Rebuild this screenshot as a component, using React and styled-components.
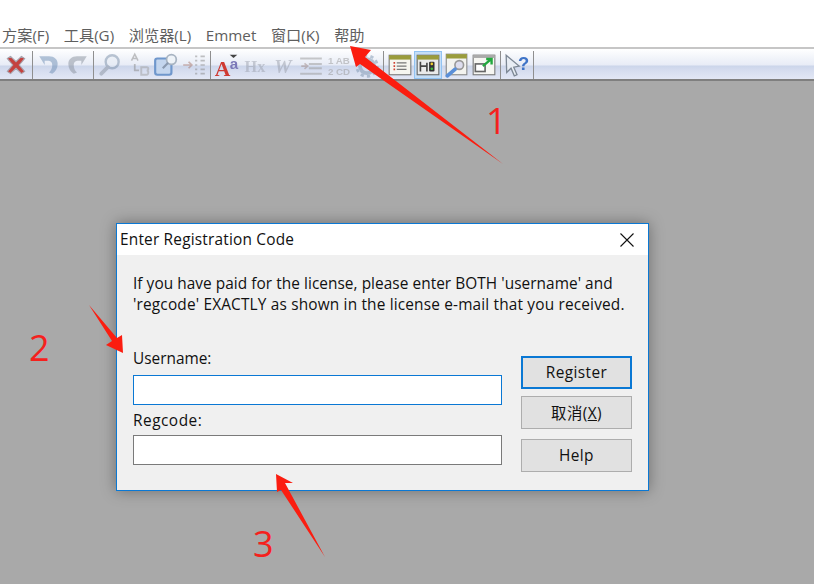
import React from 'react';
import styled, { createGlobalStyle } from 'styled-components';

const Global = createGlobalStyle`
  html, body { margin: 0; padding: 0; background: #fff; overflow: hidden; }
  #root { width: 814px; height: 584px; }
`;
const Page = styled.div`
  position: relative; width: 814px; height: 584px; overflow: hidden;
  display: flex; flex-direction: column;
  font-family: "Open Sans", "Noto Sans CJK SC", sans-serif;
`;
const MenuBar = styled.div`
  height: 47px; box-sizing: border-box; padding: 0 0 0 2px; background: #fff;
  display: flex; align-items: flex-end; gap: 14.6px;
  font-size: 15.2px; color: #5e5e5e;
`;
const MenuItem = styled.span` line-height: 24px; white-space: nowrap; `;
const Toolbar = styled.div`
  height: 34px; box-sizing: border-box; padding: 2px 0 0 2px;
  display: flex; align-items: flex-start;
  border-top: 2px solid #c6c6c6; border-bottom: 2px solid #7f7f7f;
  background: linear-gradient(#ffffff 0%, #f1f4fa 30%, #e8ecf6 54%, #cbd5ea 56%, #d6ddef 72%, #e2e7f5 100%);
`;
const ToolBtn = styled.div`
  width: 28px; height: 28px; box-sizing: border-box; flex: none;
  display: flex; align-items: center; justify-content: center;
  border: 1px solid ${p => (p.$active ? '#92c3f2' : 'transparent')};
  background: ${p => (p.$active ? '#c5def6' : 'transparent')};
  opacity: ${p => (p.$dim ? 0.5 : 1)};
  svg { filter: blur(0.6px); display: block; overflow: visible; }
`;
const ToolSep = styled.div`
  width: 1px; height: 28px; flex: none; margin: 0 2px; background: #8f8f8f;
`;
const Workspace = styled.div`
  flex: 1; background: #a9a9a9; padding: 142px 0 0 116px;
`;
const Dialog = styled.div`
  width: 533px; height: 268px; box-sizing: border-box;
  border: 1px solid #0a78d4; background: #f0f0f0;
  box-shadow: 0 0 14px rgba(0,0,0,.35);
  display: flex; flex-direction: column; color: #111;
  font-size: 15.4px;
`;
const TitleBar = styled.div`
  height: 31px; flex: none; background: #fff; box-sizing: border-box;
  padding: 0 14px 0 3px; display: flex; align-items: center; justify-content: space-between;
  line-height: 31px; letter-spacing: 0.2px;
`;
const Body = styled.div`
  flex: 1; padding: 18px 16px 0 16px; display: flex; flex-direction: column;
`;
const Message = styled.div` line-height: 21px; white-space: nowrap; `;
const MessageLine = styled.div` letter-spacing: ${p => p.$ls}px; `;
const FormRow = styled.div`
  display: flex; margin-top: 34px; justify-content: space-between;
`;
const Fields = styled.div` width: 369px; display: flex; flex-direction: column; `;
const Label = styled.label`
  display: block; line-height: 20px; height: ${p => p.$h}px; padding-top: ${p => p.$pt || 0}px;
  letter-spacing: ${p => p.$ls || 0}px;
`;
const Input = styled.div`
  height: 30px; box-sizing: border-box; background: #fff;
  border: 1px solid ${p => (p.$focus ? '#0a78d4' : '#7a7a7a')};
`;
const Buttons = styled.div`
  width: 111px; display: flex; flex-direction: column; margin-top: 7px;
`;
const Button = styled.div`
  height: 33px; box-sizing: border-box; margin-top: ${p => p.$mt || 0}px;
  background: #e1e1e1; display: flex; align-items: center; justify-content: center;
  border: ${p => (p.$primary ? '2px solid #0a78d4' : '1px solid #adadad')};
  padding-bottom: 1px; letter-spacing: 0.4px;
`;
const Underline = styled.span` text-decoration: underline; `;
const Annotations = styled.svg`
  position: absolute; left: 0; top: 0; pointer-events: none;
`;
const Num = styled.span`
  position: absolute; left: ${p => p.$x}px; top: ${p => p.$y}px;
  font-size: 36px; line-height: 37px; color: #f5211d; font-weight: 400;
`;

const I = ({ children }) => <svg width="26" height="26" viewBox="0 0 24 24">{children}</svg>;

const icons = {
  close: <I><path d="M4 6l3-2 5 5 5-5 3 2-5 6 5 6-3 2-5-5-5 5-3-2 5-6z" fill="#c4423f" stroke="#a8a4ae" strokeWidth="1" /></I>,
  undo: <I><path d="M3 4h9c5 0 8 3 8 7s-2 7-5 9l-3-1c2-2 3-4 3-7s-2-4-4-4H8v4z" fill="#6f8fb5" /></I>,
  redo: <I><path d="M21 4h-9c-5 0-8 3-8 7s2 7 5 9l3-1c-2-2-3-4-3-7s2-4 4-4h3v4z" fill="#8a929e" /></I>,
  find: <I><circle cx="14" cy="9" r="6" fill="#e6ecf4" stroke="#7a8fa8" strokeWidth="2.200" /><path d="M10 14l-6 6" stroke="#8a94a2" strokeWidth="3.500" strokeLinecap="round" /></I>,
  replace: <I><path d="M6 8l3-6 3 6M7 6h4" fill="none" stroke="#888" strokeWidth="1.400" /><path d="M9 11v6h4" fill="none" stroke="#888" strokeWidth="1.600" /><path d="M15 14h5c2 0 2 3 0 3 2 0 2 4 0 4h-5z" fill="none" stroke="#a0a0a0" strokeWidth="1.800" /></I>,
  edit: <I><rect x="2" y="6" width="15" height="15" rx="2" fill="#c4d6ee" stroke="#6f97cc" strokeWidth="2" /><circle cx="17" cy="7" r="4.500" fill="#eef3f8" stroke="#a8b4c2" strokeWidth="1.600" /><path d="M14 10l-5 5" stroke="#8a9ab0" strokeWidth="2" /></I>,
  indent: <I><path d="M2 12h7M7 9l3 3-3 3" fill="none" stroke="#a8766a" strokeWidth="1.600" /><path d="M13 4h2M13 8h2M13 12h2M13 16h2M13 20h2M18 4h4M18 8h4M18 12h4M18 16h4M18 20h4" stroke="#888" strokeWidth="1.600" /></I>,
  font: <I><path d="M14.500 2.500h7l-3.500 3z" fill="#444" /><text x="8" y="22" textAnchor="middle" fontSize="20" fontWeight="700" fontFamily="Liberation Serif" fill="#cf3a32">A</text><text x="18.500" y="16" textAnchor="middle" fontSize="14" fontWeight="700" fontFamily="Liberation Sans" fill="#7b78b8">a</text></I>,
  hx: <I><text x="12" y="18" textAnchor="middle" fontSize="15" fontWeight="700" fontFamily="Liberation Serif" fill="#9da2ae">Hx</text></I>,
  w: <I><text x="12" y="19" textAnchor="middle" fontSize="18" fontWeight="700" fontStyle="italic" fontFamily="Liberation Serif" fill="#9a9fab">W</text></I>,
  list: <I><path d="M2 6h20M10 11h12M10 15h12M2 20h20" stroke="#999" strokeWidth="1.800" /><path d="M3 13h5M6 10.500l3 2.500-3 2.500" fill="none" stroke="#a08a86" strokeWidth="1.500" /></I>,
  num: <I><text x="12" y="11" textAnchor="middle" fontSize="9" fontWeight="700" fontFamily="Liberation Sans" fill="#999">1 AB</text><text x="12" y="21" textAnchor="middle" fontSize="9" fontWeight="700" fontFamily="Liberation Sans" fill="#999">2 CD</text></I>,
  gear: <I><circle cx="12" cy="13" r="6.500" fill="none" stroke="#7d95b0" strokeWidth="3.500" /><circle cx="12" cy="13" r="9.500" fill="none" stroke="#7d95b0" strokeWidth="2.500" strokeDasharray="3 2.960" /></I>,
  panel1: <I><rect x="2" y="3" width="20" height="18" fill="#f6f6f0" stroke="#777" /><rect x="2" y="3" width="20" height="4" fill="#9a9c3c" /><path d="M9 10h9M9 13h9M9 16h9" stroke="#777" strokeWidth="1.300" /><path d="M6 10h1.500M6 13h1.500M6 16h1.500" stroke="#d04030" strokeWidth="1.500" /></I>,
  panel2: <I><rect x="2" y="3" width="20" height="18" fill="#e9eaea" stroke="#666" /><rect x="2" y="3" width="20" height="4" fill="#9a9c3c" /><path d="M5 9v9M5 13h6M11 10v8" stroke="#444" strokeWidth="1.500" /><rect x="13" y="9" width="5" height="9" rx="1" fill="#333" /><circle cx="15.500" cy="11" r="1.200" fill="#f0d030" /><circle cx="15.500" cy="15.500" r="1.200" fill="#40c040" /></I>,
  panel3: <I><rect x="3" y="2" width="19" height="19" fill="#f3f3ef" stroke="#888" /><rect x="3" y="2" width="19" height="4" fill="#9a9c3c" /><circle cx="15" cy="12" r="4" fill="#dde" stroke="#999" strokeWidth="1.500" /><path d="M11 16l-7 6" stroke="#5b8fd8" strokeWidth="3.500" strokeLinecap="round" /></I>,
  panel4: <I><rect x="2" y="3" width="20" height="18" fill="#f6f6f2" stroke="#777" /><path d="M2 4h20" stroke="#aaa" strokeWidth="3" /><rect x="4" y="11" width="9" height="7" fill="#fff" stroke="#666" strokeWidth="1.500" /><path d="M11 13l7-6M14 6.500h5v5" fill="none" stroke="#22a83e" strokeWidth="2.200" /></I>,
  help: <I><path d="M2 3l12 10-5 1 3 7-2.500 1-3-7-4 4z" fill="#e8edf4" stroke="#7c8794" strokeWidth="1.200" /><text x="18" y="17" textAnchor="middle" fontSize="17" fontWeight="700" fontFamily="Liberation Sans" fill="#3f74c8">?</text></I>,
};

const tools = [
  ['close'], '|', ['undo', 1], ['redo', 1], '|', ['find', 1], ['replace', 1], ['edit'], ['indent', 1], '|',
  ['font'], ['hx', 1], ['w', 1], ['list', 1], ['num', 1], ['gear', 1], '|',
  ['panel1'], ['panel2', 0, 1], ['panel3'], ['panel4'], '|', ['help'], '|',
];
const menus = ['方案(F)', '工具(G)', '浏览器(L)', 'Emmet', '窗口(K)', '帮助'];

export default function App() {
  return (
    <Page>
      <Global />
      <MenuBar>{menus.map(m => <MenuItem key={m}>{m}</MenuItem>)}</MenuBar>
      <Toolbar>
        {tools.map((t, i) => t === '|'
          ? <ToolSep key={i} />
          : <ToolBtn key={i} $dim={!!t[1]} $active={!!t[2]}>{icons[t[0]]}</ToolBtn>)}
      </Toolbar>
      <Workspace>
        <Dialog>
          <TitleBar>
            <span>Enter Registration Code</span>
            <svg width="14" height="14" viewBox="0 0 14 14"><path d="M.5.500l13 13M13.500.500l-13 13" stroke="#111" strokeWidth="1.100" /></svg>
          </TitleBar>
          <Body>
            <Message>
              <MessageLine $ls={0.05}>If you have paid for the license, please enter BOTH 'username' and</MessageLine>
              <MessageLine $ls={0.17}>'regcode' EXACTLY as shown in the license e-mail that you received.</MessageLine>
            </Message>
            <FormRow>
              <Fields>
                <Label $h={26}>Username:</Label>
                <Input $focus />
                <Label $h={24} $pt={6} $ls={0.5}>Regcode:</Label>
                <Input />
              </Fields>
              <Buttons>
                <Button $primary>Register</Button>
                <Button $mt={7}><span>取消(<Underline>X</Underline>)</span></Button>
                <Button $mt={10}>Help</Button>
              </Buttons>
            </FormRow>
          </Body>
        </Dialog>
      </Workspace>
      <Annotations width="814" height="584" viewBox="0 0 814 584">
        <g fill="#fb1d10">
          <polygon points="350,46 371,50 365,57 503,164 360,64 356,67" />
          <polygon points="89,305 117,338 122,335 123,353 106,345 112,341" />
          <polygon points="276,474 293,483 285,483 325,557 281,490 277,492" />
        </g>
      </Annotations>
      <Num $x={486} $y={102}>1</Num>
      <Num $x={29} $y={329}>2</Num>
      <Num $x={253} $y={525}>3</Num>
    </Page>
  );
}
